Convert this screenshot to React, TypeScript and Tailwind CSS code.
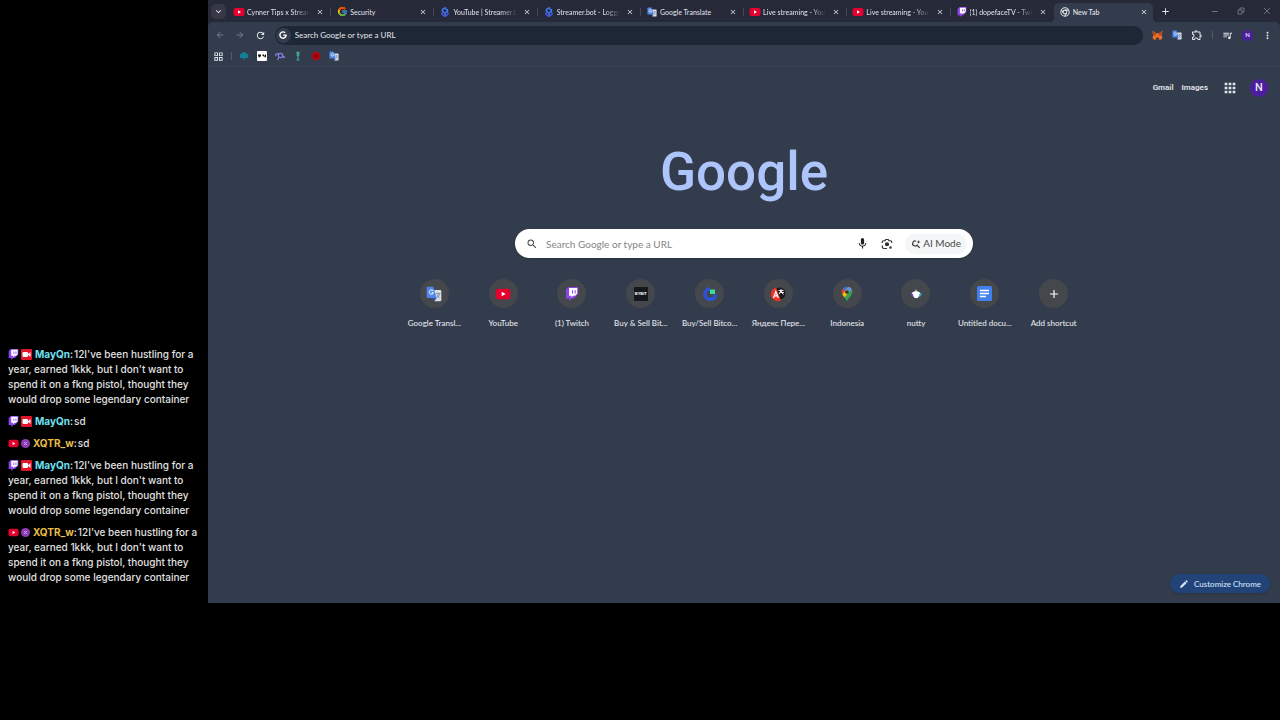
import type { ReactNode } from 'react';
import { FcGoogle } from 'react-icons/fc';
import { FaGoogle } from 'react-icons/fa';
import {
    MdAdd,
    MdApps,
    MdArrowBack,
    MdArrowForward,
    MdClose,
    MdEdit,
    MdKeyboardArrowDown,
    MdMic,
    MdMoreVert,
    MdOutlineExtension,
    MdOutlineGridView,
    MdQueueMusic,
    MdRefresh,
    MdSearch,
} from 'react-icons/md';

const tabs = [
    { title: 'Cynner Tips x Stream', icon: <YouTubeIcon className="size-3" /> },
    { title: 'Security', icon: <FcGoogle className="size-[11px]" /> },
    { title: 'YouTube | Streamer.b', icon: <StreamerBotIcon className="size-[10px]" /> },
    { title: 'Streamer.bot - Logge', icon: <StreamerBotIcon className="size-[10px]" /> },
    { title: 'Google Translate', icon: <TranslateIcon className="size-[10px]" /> },
    { title: 'Live streaming - You', icon: <YouTubeIcon className="size-3" /> },
    { title: 'Live streaming - You', icon: <YouTubeIcon className="size-3" /> },
    { title: '(1) dopefaceTV - Twi', icon: <TwitchIcon className="size-[10px]" /> },
    { title: 'New Tab', icon: <ChromeIcon className="size-[10px]" />, active: true },
];

const shortcuts = [
    { label: 'Google Transl...', icon: <TranslateIcon className="size-4" /> },
    { label: 'YouTube', icon: <YouTubeIcon className="size-4" /> },
    { label: '(1) Twitch', icon: <TwitchIcon className="size-[14px]" /> },
    { label: 'Buy & Sell Bit...', icon: <BybitIcon /> },
    { label: 'Buy/Sell Bitco...', icon: <ExchangeIcon /> },
    { label: 'Яндекс Пере...', icon: <YandexIcon /> },
    { label: 'Indonesia', icon: <MapsIcon /> },
    { label: 'nutty', icon: <NuttyIcon /> },
    { label: 'Untitled docu...', icon: <DocsIcon /> },
];

const longText =
    "12I've been hustling for a year, earned 1kkk, but I don't want to spend it on a fkng pistol, thought they would drop some legendary container";

const messages = [
    { user: 'MayQn', text: longText },
    { user: 'MayQn', text: 'sd' },
    { user: 'XQTR_w', text: 'sd' },
    { user: 'MayQn', text: longText },
    { user: 'XQTR_w', text: longText },
];

export default function App() {
    return (
        <div className="flex min-h-screen bg-black pb-[117px] font-['Lato','Open_Sans',sans-serif]">
            <Chat />
            <main className="flex min-w-0 flex-1 flex-col bg-[#262937] text-[#e3e6ec]">
                <TabStrip />
                <Toolbar />
                <Bookmarks />
                <NewTabPage />
            </main>
        </div>
    );
}

function Chat() {
    return (
        <aside className="flex w-52 shrink-0 flex-col justify-end gap-[7px] px-2 pb-[18px] font-['Inter',sans-serif] text-[10px] font-medium leading-[15px] text-[#e0e0e0]">
            {messages.map((message, i) => (
                <ChatMessage key={i} user={message.user} text={message.text} />
            ))}
        </aside>
    );
}

function ChatMessage({ user, text }: { user: string; text: string }) {
    const fromTwitch = user === 'MayQn';

    return (
        <p>
            <span className="mr-[3px] inline-flex items-center gap-[2px] align-[-2px]">
                {fromTwitch ? (
                    <>
                        <TwitchIcon className="size-[11px]" />
                        <BroadcasterIcon />
                    </>
                ) : (
                    <>
                        <YouTubeIcon className="size-[11px]" />
                        <svg viewBox="0 0 10 10" className="size-[9px]">
                            <circle cx="5" cy="5" r="5" fill="#8e3bb5" />
                            <path d="M3.5 3.2l3 3.6M6.5 3.2l-3 3.6" stroke="#dfc3ee" strokeWidth=".8" />
                        </svg>
                    </>
                )}
            </span>
            <b className={fromTwitch ? 'font-bold text-[#6fe0f5]' : 'font-bold text-[#e8bd4a]'}>{user}</b>
            <span className="mr-px">:</span>
            {text}
        </p>
    );
}

function TabStrip() {
    return (
        <div className="flex h-[22px] items-end">
            <button aria-label="Search tabs" className="mb-[3px] ml-[3px] mr-[2px] flex size-[15px] items-center justify-center rounded-[5px] bg-[#363845]">
                <MdKeyboardArrowDown className="size-[11px]" />
            </button>
            <div className="grid min-w-0 flex-1 auto-cols-fr grid-flow-col">
                {tabs.map((tab, i) => (
                    <Tab key={i} title={tab.title} icon={tab.icon} active={tab.active} divider={i < 7} />
                ))}
            </div>
            <button aria-label="New tab" className="mb-[5px] ml-[3px]">
                <MdAdd className="size-[11px]" />
            </button>
            <div className="mb-[6px] ml-[39px] mr-2 flex gap-4 text-[#81848e]">
                <button aria-label="Minimize">
                    <WindowIcon d="M2 5.500h6" />
                </button>
                <button aria-label="Restore">
                    <WindowIcon d="M2 4h4v4H2zM4 4V2h4v4H6" />
                </button>
                <button aria-label="Close">
                    <WindowIcon d="M2 2l6 6M8 2L2 8" />
                </button>
            </div>
        </div>
    );
}

type TabProps = { title: string; icon: ReactNode; active?: boolean; divider: boolean };

function Tab({ title, icon, active, divider }: TabProps) {
    return (
        <div
            className={
                active
                    ? 'relative mr-1 flex h-[19px] min-w-0 items-center rounded-t-[5px] bg-[#333c4c] pb-[2px] pl-[5px] pr-[2px] before:absolute before:-left-1 before:bottom-0 before:size-1 before:bg-[radial-gradient(circle_at_0_0,transparent_4px,#333c4c_4px)] after:absolute after:-right-1 after:bottom-0 after:size-1 after:bg-[radial-gradient(circle_at_100%_0,transparent_4px,#333c4c_4px)]'
                    : 'flex h-[19px] min-w-0 items-center pb-[2px] pl-[5px] text-[#dcdfe6]'
            }
        >
            <span className="flex w-3 shrink-0 justify-center">{icon}</span>
            <button
                className={
                    title.length > 18
                        ? 'ml-[2px] min-w-0 flex-1 overflow-hidden whitespace-nowrap text-left text-[7px] font-medium leading-3 [mask-image:linear-gradient(to_right,black_75%,transparent)]'
                        : 'ml-[2px] min-w-0 flex-1 overflow-hidden whitespace-nowrap text-left text-[7px] font-medium leading-3'
                }
            >
                {title}
            </button>
            <button aria-label={`Close ${title}`} className="ml-[6px] mr-[3px] shrink-0">
                <MdClose className="size-2" />
            </button>
            {!active && <span className={divider ? 'ml-[3px] h-2 w-px bg-[#444856]' : 'ml-[3px] h-2 w-px'} />}
        </div>
    );
}

function Toolbar() {
    return (
        <div className="flex h-[26px] items-center rounded-t-[5px] bg-[#333c4c] pl-[7px] pr-[7px]">
            <div className="flex gap-[10px]">
                <button aria-label="Back" className="text-[#747c89]">
                    <MdArrowBack className="size-[10px]" />
                </button>
                <button aria-label="Forward" className="text-[#747c89]">
                    <MdArrowForward className="size-[10px]" />
                </button>
                <button aria-label="Reload">
                    <MdRefresh className="size-[11px]" />
                </button>
            </div>
            <label className="ml-[9px] mr-[9px] flex h-[19px] flex-1 items-center gap-[4px] rounded-full bg-[#1e2735] pl-[1px]">
                <span className="flex size-[15px] items-center justify-center rounded-full bg-[#333c4c]">
                    <FaGoogle className="size-2 text-white" />
                </span>
                <input
                    aria-label="Address"
                    placeholder="Search Google or type a URL"
                    className="w-full bg-transparent text-[8px] leading-4 outline-none placeholder:text-[#e3e6ec]"
                />
            </label>
            <div className="flex items-center gap-[9px]">
                <button aria-label="MetaMask">
                    <MetaMaskIcon />
                </button>
                <button aria-label="Translate">
                    <TranslateIcon className="size-[10px]" />
                </button>
                <button aria-label="Extensions">
                    <MdOutlineExtension className="size-3" />
                </button>
                <span className="h-2 w-px bg-[#535c6b]" />
                <button aria-label="Media controls">
                    <MdQueueMusic className="size-[11px]" />
                </button>
                <button aria-label="Profile" className="flex size-[11px] items-center justify-center rounded-full bg-[#4c1d9e] text-[6px] font-bold leading-none">
                    N
                </button>
                <button aria-label="Menu">
                    <MdMoreVert className="size-[11px]" />
                </button>
            </div>
        </div>
    );
}

function Bookmarks() {
    return (
        <nav className="flex h-[19px] items-center gap-2 border-b border-[#3a4250] bg-[#333c4c] px-[5px] pb-[2px]">
            <a href="#" aria-label="Apps">
                <MdOutlineGridView className="size-[11px]" />
            </a>
            <span className="-mx-px h-2 w-px bg-[#535c6b]" />
            <a href="#" aria-label="Cloud">
                <svg viewBox="0 0 10 10" className="size-[10px]" fill="#157e93">
                    <circle cx="5" cy="3.800" r="2.800" />
                    <circle cx="2.700" cy="5" r="2.200" />
                    <circle cx="7.400" cy="5" r="2.200" />
                    <path d="M4 6h2l-.5 3h-1z" />
                </svg>
            </a>
            <a href="#" aria-label="Player">
                <svg viewBox="0 0 10 10" className="size-[10px]">
                    <rect width="10" height="10" rx="1" fill="#fff" />
                    <path d="M1 3.500h3v1.200L3 6.200H1.500V5L1 4.700zM5.500 3.500H7v1h1v-1h1v2.700H7.500v-1h-2z" fill="#111" />
                </svg>
            </a>
            <a href="#" aria-label="Planet">
                <svg viewBox="0 0 10 10" className="size-[10px]" fill="none" stroke="#7f83e6" strokeWidth="1.200">
                    <circle cx="5.500" cy="4.500" r="2.200" />
                    <path d="M3.600 2.700C1 2.500 0 4 1.400 5M7.500 5c2 .6 2.500 1.600.5 1.600M4 6.300L2.500 9" />
                </svg>
            </a>
            <a href="#" aria-label="Figure">
                <svg viewBox="0 0 10 10" className="size-[10px]" stroke="#3fae94" strokeWidth="1.200" fill="none">
                    <circle cx="5" cy="2" r="1" fill="#8cd3c2" />
                    <path d="M5 3v5M3.500 4.200h3M3.500 8.800h3" />
                </svg>
            </a>
            <a href="#" aria-label="Red">
                <svg viewBox="0 0 10 10" className="size-[10px]">
                    <circle cx="5" cy="5" r="4.300" fill="#b5060f" />
                    <path d="M2.500 4.500L5 3l2.500 2.500L5 7z" fill="#7c0810" />
                </svg>
            </a>
            <a href="#" aria-label="Google Translate">
                <TranslateIcon className="size-[10px]" />
            </a>
        </nav>
    );
}

function NewTabPage() {
    return (
        <section className="flex flex-1 flex-col bg-[#333c4c]">
            <header className="mt-[11px] flex h-[19px] items-center justify-end pr-3 font-['Roboto',sans-serif] text-[8px] font-semibold">
                <a href="#" className="mr-2">Gmail</a>
                <a href="#">Images</a>
                <button aria-label="Google apps" className="ml-[14px] mr-3">
                    <MdApps className="size-4" />
                </button>
                <button aria-label="Account" className="flex size-[18px] items-center justify-center rounded-full bg-[#4c1d9e] text-[11px] font-medium leading-none">
                    N
                </button>
            </header>

            <h1 className="mt-[43px] text-center font-['Roboto',sans-serif] text-[53px] font-medium leading-[64px] text-[#aec5fb]">Google</h1>

            <form className="mx-auto mt-[25px] flex h-[29px] w-full max-w-[458px] items-center rounded-full bg-white pl-[11px] pr-[6px] text-[#474747] shadow-sm">
                <MdSearch className="size-3" />
                <input
                    aria-label="Search"
                    placeholder="Search Google or type a URL"
                    className="ml-2 min-w-0 flex-1 bg-transparent text-[10px] leading-4 outline-none placeholder:text-[#858585]"
                />
                <button type="button" aria-label="Search by voice">
                    <MdMic className="size-[13px] text-[#222]" />
                </button>
                <button type="button" aria-label="Search by image" className="ml-3">
                    <LensIcon />
                </button>
                <button type="button" className="ml-3 flex h-5 items-center gap-[2px] rounded-full bg-[#f4f6f7] px-[6px] text-[10px]">
                    <AiSearchIcon />
                    AI Mode
                </button>
            </form>

            <div className="mx-auto mt-[21px] grid w-full max-w-[688px] grid-cols-10 text-[8px] font-medium leading-3">
                {shortcuts.map((shortcut) => (
                    <a key={shortcut.label} href="#" className="flex flex-col items-center whitespace-nowrap">
                        <span className="mb-[9px] flex size-[29px] items-center justify-center rounded-full bg-[#44474c]">{shortcut.icon}</span>
                        {shortcut.label}
                    </a>
                ))}
                <button className="flex flex-col items-center whitespace-nowrap">
                    <span className="mb-[9px] flex size-[29px] items-center justify-center rounded-full bg-[#44474c]">
                        <MdAdd className="size-[14px] text-white" />
                    </span>
                    Add shortcut
                </button>
            </div>

            <button className="mb-[10px] ml-auto mr-[10px] mt-auto flex h-[19px] items-center gap-[5px] rounded-full bg-[#224378] px-[9px] text-[8px] font-medium text-[#d5e3fc] shadow">
                <MdEdit className="size-[10px]" />
                Customize Chrome
            </button>
        </section>
    );
}

function WindowIcon({ d }: { d: string }) {
    return (
        <svg viewBox="0 0 10 10" className="size-[10px]" fill="none" stroke="currentColor" strokeWidth=".8">
            <path d={d} />
        </svg>
    );
}

function YouTubeIcon({ className }: { className: string }) {
    return (
        <svg viewBox="0 0 24 24" className={className}>
            <rect x="1" y="4" width="22" height="16" rx="4" fill="#e4002f" />
            <path d="M10 8.500v7l6-3.500z" fill="#fff" />
        </svg>
    );
}

function TwitchIcon({ className }: { className: string }) {
    return (
        <svg viewBox="0 0 24 24" className={className}>
            <path d="M6 0L1.500 4.500v15H7V24l4.500-4.500h3.700L22.500 12V0z" fill="#8b45e8" />
            <path d="M7 1.800h14v9.500l-3.500 3.500H14l-3 3v-3H7z" fill="#fff" />
            <path d="M12 5.500h1.800V11H12zM16.500 5.500h1.800V11h-1.800z" fill="#8b45e8" />
        </svg>
    );
}

function BroadcasterIcon() {
    return (
        <svg viewBox="0 0 11 11" className="size-[11px]">
            <rect width="11" height="11" rx="1" fill="#e0162c" />
            <rect x="1.500" y="3" width="5.500" height="5" rx="1" fill="#fff" />
            <path d="M7 5.200L9.500 3v5L7 5.800z" fill="#fff" />
        </svg>
    );
}

function TranslateIcon({ className }: { className: string }) {
    return (
        <svg viewBox="0 0 24 24" className={className}>
            <path d="M9 6h12.500q1.500 0 1.500 1.500v14q0 1.500-1.500 1.500H13z" fill="#d9dee5" />
            <path d="M2.500 1H11l5 17H2.500Q1 18 1 16.500v-14Q1 1 2.500 1z" fill="#4d86e8" />
            <path d="M11 18h5l-3.500 5z" fill="#2c5bc0" />
            <path d="M11 7.500A3.300 3.300 0 1 0 11.300 10H8.300" stroke="#fff" strokeWidth="1.500" fill="none" />
            <path d="M15 11.500h6.500M18 10v1.500M20 12c-.5 3-2 4.500-4 6M16.500 13.500c1 2 2.500 3.500 4 4.500" stroke="#66758a" strokeWidth="1.200" fill="none" />
        </svg>
    );
}

function StreamerBotIcon({ className }: { className: string }) {
    return (
        <svg viewBox="0 0 20 20" className={className} fill="none" strokeWidth="2.800">
            <path d="M12 1L5 5v4l5 3 5-3V6l-4-2" stroke="#3f80ff" />
            <path d="M8 10l-4 2v3l6 4 6-4v-3l-2-1.500" stroke="#3a5fe6" />
            <path d="M8 14l2 1.500 2-1.500" stroke="#7a5cf0" />
        </svg>
    );
}

function ChromeIcon({ className }: { className: string }) {
    return (
        <svg viewBox="0 0 24 24" className={className} fill="none" stroke="#dfe3ea" strokeWidth="2.500">
            <circle cx="12" cy="12" r="10" />
            <circle cx="12" cy="12" r="4.500" />
            <path d="M12 7.500h9M8 14L3.500 6.500M16 14l-4.500 8" />
        </svg>
    );
}

function MetaMaskIcon() {
    return (
        <svg viewBox="0 0 20 20" className="size-[11px]">
            <path d="M1 2l7 4h4l7-4-1 8 1 5-4 3-3-1h-4l-3 1-4-3 1-5z" fill="#e5702b" />
            <path d="M1 2l7 4-1 4-5 0zM19 2l-7 4 1 4 5 0z" fill="#b3481f" />
            <path d="M8 14h4l1 3H7z" fill="#2b2430" />
        </svg>
    );
}

function LensIcon() {
    return (
        <svg viewBox="0 0 24 24" className="size-3" fill="none" stroke="#333" strokeWidth="2.400">
            <path d="M2.500 10V8.500a3 3 0 0 1 3-3H8L9.500 3h5L16 5.500h2.500a3 3 0 0 1 3 3V10M2.500 15v2.500a3.500 3.500 0 0 0 3.500 3.500h6" />
            <circle cx="12" cy="12.500" r="3" fill="#333" />
            <circle cx="19" cy="19" r="1.300" fill="#333" />
        </svg>
    );
}

function AiSearchIcon() {
    return (
        <svg viewBox="0 0 24 24" className="size-[10px]" fill="none" stroke="#333" strokeWidth="2.600">
            <path d="M12 5.200A6 6 0 1 0 15.500 13M14 15l7 6" />
            <path d="M18 2.500l1.300 3.200L22.500 7l-3.200 1.300L18 11.500l-1.300-3.200L13.500 7l3.200-1.300z" fill="#333" stroke="none" />
        </svg>
    );
}

function BybitIcon() {
    return (
        <span className="flex size-[14px] items-center justify-center bg-[#17181e] font-['Liberation_Sans',sans-serif] text-[4px] font-bold leading-none text-white">
            BYBIT
        </span>
    );
}

function ExchangeIcon() {
    return (
        <svg viewBox="0 0 16 16" className="size-4">
            <path d="M8 2.800A5.300 5.300 0 1 0 13.500 8.500" fill="none" stroke="#2c52d8" strokeWidth="3.600" />
            <rect x="8" y="3.500" width="5" height="4.500" fill="#35dd9b" />
        </svg>
    );
}

function YandexIcon() {
    return (
        <svg viewBox="0 0 16 16" className="size-4">
            <circle cx="9.500" cy="7.500" r="6" fill="#1b1b1d" />
            <path d="M6 1.500l5 13a7 7 0 1 1-5-13z" fill="#ee3326" />
            <path d="M3.500 12l2.300-6.500L8.300 12M4.200 9.800h3.400" fill="none" stroke="#fff" strokeWidth="1.200" />
            <path d="M8.500 4.500h5M11 3v1.500M9 8l3.500-3.500M10 5l3.500 3.500M9.500 6.500h4.500" fill="none" stroke="#fff" strokeWidth=".9" />
        </svg>
    );
}

function MapsIcon() {
    return (
        <svg viewBox="0 0 24 24" className="size-4">
            <path d="M12 1a8 8 0 0 0-6.200 3l4 3.500L15 1.500A8 8 0 0 0 12 1z" fill="#3f76e8" />
            <path d="M5.800 4A8 8 0 0 0 4.800 12.500l5-5z" fill="#e04335" />
            <path d="M15 1.500a8 8 0 0 1 4 3.500L8.500 17.500Q5.500 14 4.800 12.500z" fill="#f7bb12" />
            <path d="M19 5c2 4 .8 7-1.500 10-2.500 3-4 5-5.500 8-1-2-2-3.800-3.500-5.500z" fill="#33a352" />
            <path d="M15 1.500A8 8 0 0 1 19 5l-4 4.500L12 5z" fill="#5b93f5" />
            <circle cx="12" cy="9" r="2.800" fill="#283142" />
        </svg>
    );
}

function NuttyIcon() {
    return (
        <svg viewBox="0 0 16 16" className="size-[14px]">
            <path d="M2 7l4-2v6H4z" fill="#7e3fe0" />
            <path d="M11 5l4 3-3 4z" fill="#2aa7cf" />
            <path d="M3.500 6.500Q8 2.500 12.500 6.500V8h-9z" fill="#fff" />
            <path d="M4.500 8h7.500q0 3-2 4.500h-3.500Q4.500 11 4.500 8z" fill="#fff" />
            <path d="M8 3v2" stroke="#fff" />
        </svg>
    );
}

function DocsIcon() {
    return (
        <svg viewBox="0 0 15 15" className="size-[15px]">
            <rect width="15" height="15" rx="1.500" fill="#4380ee" />
            <path d="M3 4.500h9M3 7.500h9M3 10.500h6" stroke="#fff" strokeWidth="1.400" />
        </svg>
    );
}
